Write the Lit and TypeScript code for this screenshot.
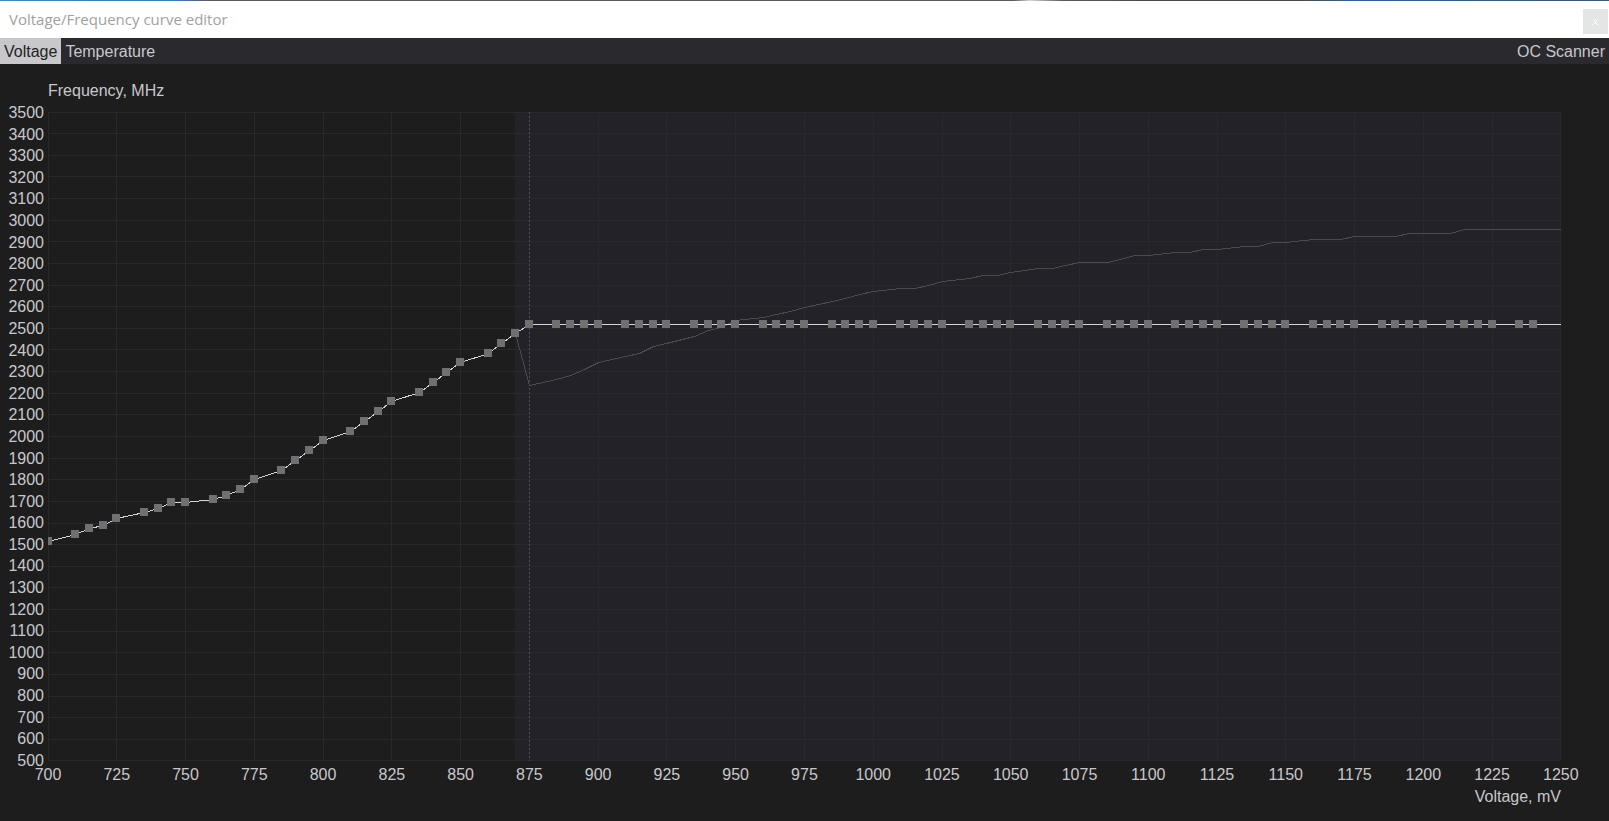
import { LitElement, html, svg, css } from "lit";
import { customElement, state } from "lit/decorators.js";

type Point = [mV: number, mhz: number];

const MIN_MV = 700;
const MAX_MV = 1250;
const MIN_MHZ = 500;
const MAX_MHZ = 3500;
const LOCK_MV = 875;
const LOCK_MHZ = 2520;

const range = (from: number, to: number, step: number): number[] =>
  Array.from({ length: Math.floor((to - from) / step) + 1 }, (_, i) => from + i * step);

const RAMP: Point[] = [
  [700, 1515], [710, 1545], [715, 1575], [720, 1590], [725, 1620], [735, 1650], [740, 1665],
  [745, 1695], [750, 1695], [760, 1710], [765, 1725], [770, 1755], [775, 1800], [785, 1845],
  [790, 1890], [795, 1935], [800, 1980], [810, 2025], [815, 2070], [820, 2115], [825, 2160],
  [835, 2205], [840, 2250], [845, 2295], [850, 2340], [860, 2385], [865, 2430], [870, 2475],
];

// Past the lock voltage every step runs at the same clock.
const FLAT: Point[] = range(LOCK_MV, 1240, 5)
  .filter((mv) => mv % 25 !== 5)
  .map((mv) => [mv, LOCK_MHZ]);

const CURVE: Point[] = [...RAMP, ...FLAT];

const DEFAULT_CURVE: Point[] = [
  [870, 2475], [875, 2235], [885, 2265], [890, 2280], [895, 2310], [900, 2340], [910, 2370],
  [915, 2385], [920, 2415], [925, 2430], [935, 2460], [940, 2490], [945, 2505], [950, 2535],
  [960, 2550], [965, 2565], [970, 2580], [975, 2595], [980, 2610], [985, 2625], [990, 2640],
  [995, 2655], [1000, 2670], [1010, 2685], [1015, 2685], [1020, 2700], [1025, 2715],
  [1035, 2730], [1040, 2745], [1045, 2745], [1050, 2760], [1060, 2775], [1065, 2775],
  [1070, 2790], [1075, 2805], [1085, 2805], [1090, 2820], [1095, 2835], [1100, 2835],
  [1110, 2850], [1115, 2850], [1120, 2865], [1125, 2865], [1135, 2880], [1140, 2880],
  [1145, 2895], [1150, 2895], [1160, 2910], [1170, 2910], [1175, 2925], [1190, 2925],
  [1195, 2940], [1210, 2940], [1215, 2955], [1250, 2955],
];

@customElement("vf-plot")
class VfPlot extends LitElement {
  static styles = css`
    :host {
      display: block;
      min-width: 0;
      min-height: 0;
      overflow: hidden;
      contain: size;
    }
    .plot {
      display: block;
      width: 100%;
      height: 100%;
      shape-rendering: crispEdges;
    }
    .zone { fill: #232228; }
    .grid { stroke: #29292b; }
    .lock { stroke: #4d4d51; stroke-dasharray: 2 2; }
    .curve { fill: none; stroke: #d4d4d6; }
    .default { fill: none; stroke: #4b4b4e; }
    .node { fill: #707072; }
  `;

  @state() private w = 0;
  @state() private h = 0;
  private observer?: ResizeObserver;

  connectedCallback() {
    super.connectedCallback();
    this.observer = new ResizeObserver(() => this.measure());
    this.observer.observe(this);
  }

  disconnectedCallback() {
    this.observer?.disconnect();
    super.disconnectedCallback();
  }

  private measure() {
    this.w = this.clientWidth;
    this.h = this.clientHeight;
  }

  private x(mv: number) {
    const px = Math.floor(((mv - MIN_MV) / (MAX_MV - MIN_MV)) * this.w);
    return Math.min(px, this.w - 1);
  }

  private y(mhz: number) {
    const px = Math.floor(((mhz - MIN_MHZ) / (MAX_MHZ - MIN_MHZ)) * this.h);
    return Math.max(this.h - 1 - px, 0);
  }

  private trace(points: Point[]) {
    return points.map(([mv, f]) => `${this.x(mv) + 0.5},${this.y(f) + 0.5}`).join(" ");
  }

  render() {
    if (this.w < 2 || this.h < 2) return html``;
    const { w, h } = this;
    const zone = this.x(870);
    const lock = this.x(LOCK_MV) + 0.5;
    return html`
      <svg class="plot" role="img" aria-label="Voltage/Frequency curve">
        <rect class="zone" x=${zone} y="0" width=${w - zone} height=${h}></rect>
        ${range(MIN_MV, MAX_MV, 25).map((mv) => {
          const x = this.x(mv) + 0.5;
          return svg`<line class="grid" x1=${x} x2=${x} y1="0" y2=${h}></line>`;
        })}
        ${range(MIN_MHZ, MAX_MHZ, 100).map((f) => {
          const y = this.y(f) + 0.5;
          return svg`<line class="grid" x1="0" x2=${w} y1=${y} y2=${y}></line>`;
        })}
        <line class="lock" x1=${lock} x2=${lock} y1="0" y2=${h}></line>
        <polyline class="default" points=${this.trace(DEFAULT_CURVE)}></polyline>
        <polyline class="curve" points=${this.trace([...CURVE, [MAX_MV, LOCK_MHZ]])}></polyline>
        ${CURVE.map(
          ([mv, f]) =>
            svg`<rect class="node" x=${this.x(mv) - 4} y=${this.y(f) - 4} width="8" height="8"></rect>`
        )}
      </svg>
    `;
  }
}

@customElement("app-root")
class AppRoot extends LitElement {
  static styles = css`
    :host {
      display: flex;
      flex-direction: column;
      height: 100vh;
      min-height: 480px;
      background: #1d1d1e;
      color: #c8c8ca;
      font: 16px/20px "Liberation Sans", Arial, sans-serif;
    }
    button {
      border: 0;
      margin: 0;
      background: none;
      color: inherit;
      font: inherit;
    }
    .desktop {
      height: 1px;
      background: linear-gradient(
        to right,
        #4a82c0 0%, #3f78b8 11%, #5a5a62 13%, #5a5a62 63%, #d8d8d8 64%,
        #5a5a62 66%, #4a4a4e 71%, #4a4a4e 81%, #2f6296 84%, #35577c 100%
      );
    }
    .titlebar {
      display: flex;
      align-items: center;
      justify-content: space-between;
      height: 37px;
      padding: 0 1px 0 9px;
      background: #fff;
    }
    .title {
      margin: 0;
      padding-bottom: 2px;
      color: #a0a2a2;
      font: 400 15px/20px "Open Sans", "Noto Sans", sans-serif;
    }
    .close {
      display: grid;
      place-items: center;
      width: 25px;
      height: 25px;
      padding: 0;
      margin-top: 4px;
      background: #e4e6e5;
    }
    .cross { fill: #fff; shape-rendering: crispEdges; }
    .menu {
      display: flex;
      background: #29292e;
    }
    .item {
      height: 26px;
      padding: 2px 4px 0;
    }
    .item.active {
      background: #c8c8ca;
      color: #222226;
    }
    .item.end { margin-left: auto; }
    .chart {
      flex: 1;
      display: grid;
      grid-template-columns: 48px 1fr 48px;
      grid-template-rows: 20px 1fr 24px 20px;
      padding: 17px 0 16px;
    }
    .y-title { grid-area: 1 / 2; }
    .y-axis {
      grid-area: 2 / 1;
      display: flex;
      flex-direction: column;
      justify-content: space-between;
      margin-top: 12px;
      padding-right: 4px;
      text-align: right;
      line-height: 0;
    }
    .y-tick { height: 0; }
    vf-plot {
      grid-area: 2 / 2;
      margin-top: 11px;
    }
    .x-axis {
      grid-area: 3 / 2;
      display: flex;
      justify-content: space-between;
      padding-top: 4px;
    }
    .x-tick {
      display: flex;
      justify-content: center;
      width: 0;
    }
    .x-title {
      grid-area: 4 / 2;
      justify-self: end;
      padding-top: 2px;
    }
  `;

  @state() private tab = "Voltage";

  render() {
    return html`
      <div class="desktop"></div>
      <header class="titlebar">
        <h1 class="title">Voltage/Frequency curve editor</h1>
        <button class="close" aria-label="Close">
          <svg class="cross" width="7" height="6" viewBox="0 0 7 6">
            <path d="M1 0h1v1H1zM5 0h1v1H5zM2 1h1v1H2zM4 1h1v1H4zM3 2h1v2H3zM2 4h1v1H2zM4 4h1v1H4zM0 5h1v1H0zM5 5h1v1H5z"></path>
          </svg>
        </button>
      </header>
      <nav class="menu">
        ${["Voltage", "Temperature"].map(
          (name) => html`<button
            class="item ${this.tab === name ? "active" : ""}"
            aria-pressed=${this.tab === name}
            @click=${() => (this.tab = name)}
          >${name}</button>`
        )}
        <button class="item end">OC Scanner</button>
      </nav>
      <main class="chart">
        <div class="y-title">Frequency, MHz</div>
        <div class="y-axis">
          ${range(MIN_MHZ, MAX_MHZ, 100)
            .reverse()
            .map((f) => html`<span class="y-tick">${f}</span>`)}
        </div>
        <vf-plot></vf-plot>
        <div class="x-axis">
          ${range(MIN_MV, MAX_MV, 25).map((mv) => html`<span class="x-tick">${mv}</span>`)}
        </div>
        <div class="x-title">Voltage, mV</div>
      </main>
    `;
  }
}
